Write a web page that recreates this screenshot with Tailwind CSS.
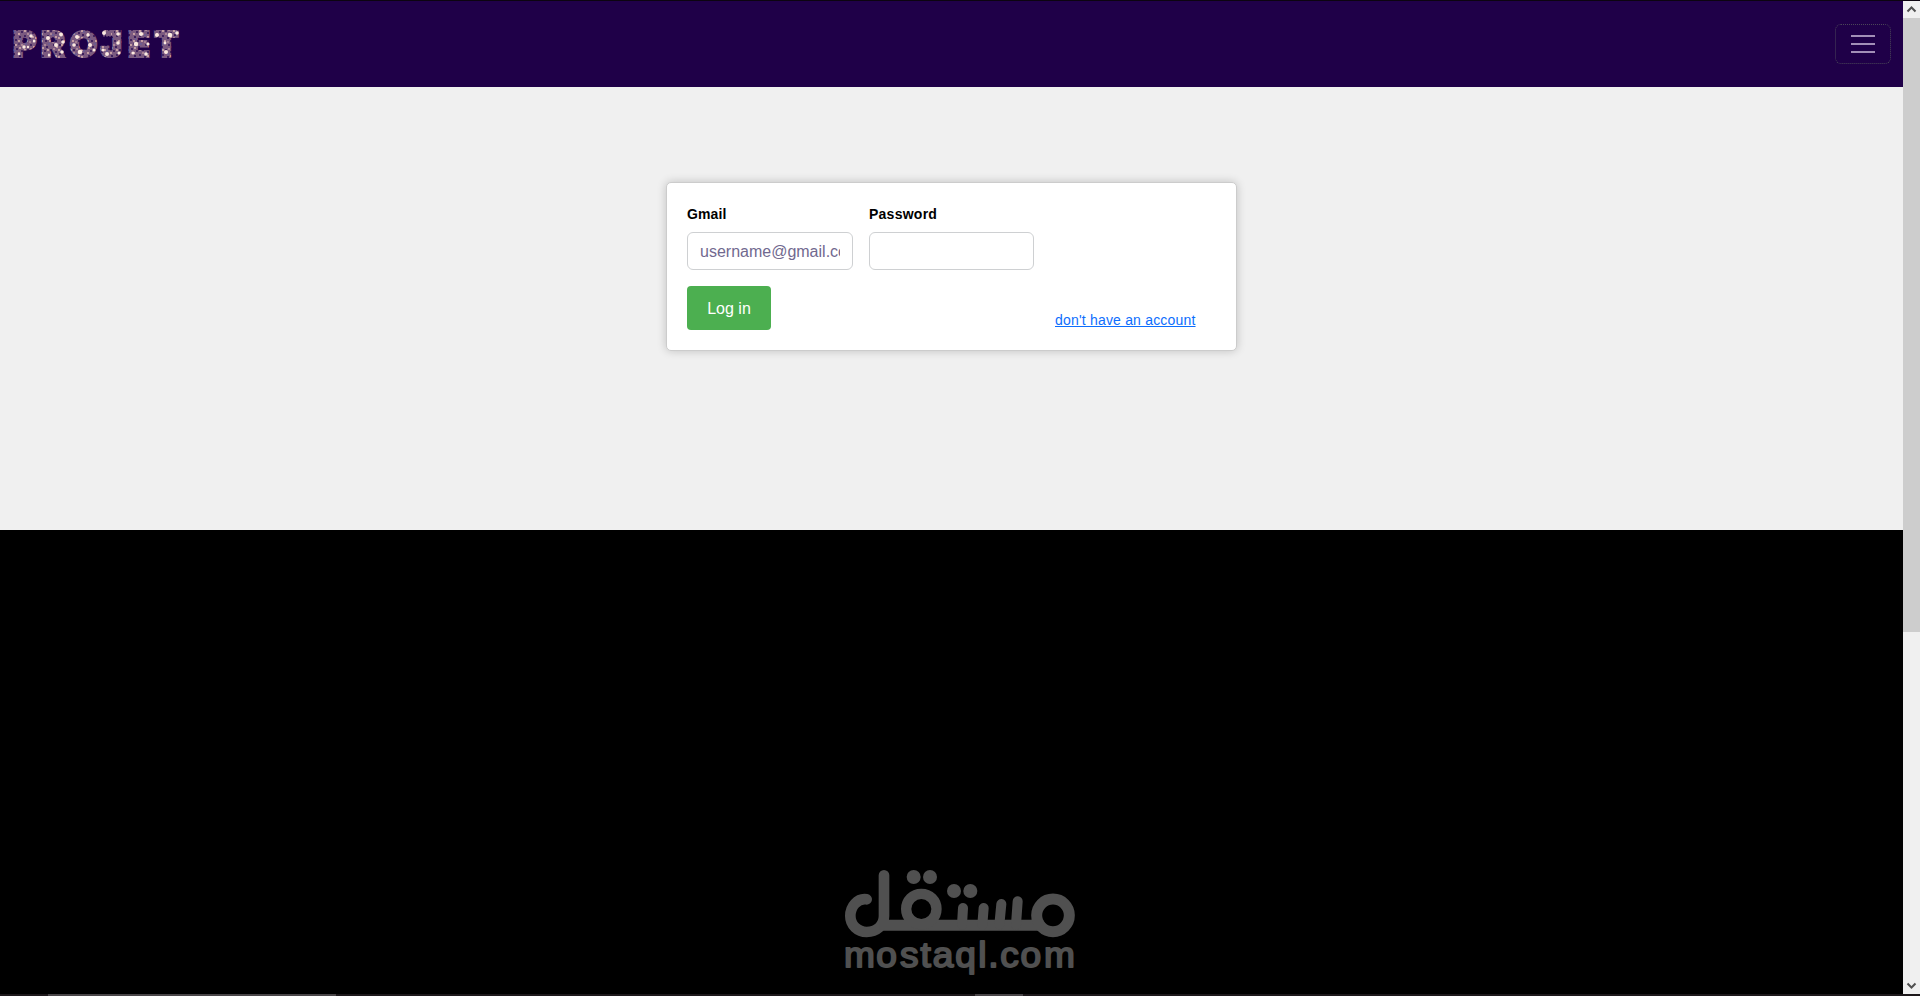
<!DOCTYPE html>
<html lang="en">
<head>
<meta charset="UTF-8" />
<meta name="viewport" content="width=device-width, initial-scale=1.0" />
<title>Projet - Log in</title>
<script src="https://cdn.jsdelivr.net/npm/@tailwindcss/browser@4"></script>
</head>
<body class="h-screen overflow-hidden bg-black font-['Liberation_Sans',sans-serif]">
<div class="flex flex-col h-screen border-t border-[#0c0410]">

    <div class="flex flex-1 min-h-0">
    <!-- Page -->
    <div class="relative flex flex-col flex-1 bg-black">
        <nav class="flex items-start justify-between h-[86px] bg-[#1f0048] pl-3 pr-3 pt-[23px]">
        <a href="#" aria-label="Projet">
            <svg class="w-[172px] h-10 overflow-visible" viewBox="0 0 172 40">
            <defs>
                <pattern id="speckle" width="23" height="19" patternUnits="userSpaceOnUse">
                <rect width="23" height="19" fill="#7b5a80" />
                <g fill="#270b50">
                    <circle cx="2" cy="2" r="1" /><circle cx="7" cy="1" r=".8" /><circle cx="12" cy="4" r="1" /><circle cx="19" cy="2" r=".9" />
                    <circle cx="5" cy="6" r=".9" /><circle cx="10" cy="8" r=".9" /><circle cx="16" cy="7" r="1" /><circle cx="21" cy="9" r=".9" />
                    <circle cx="2" cy="11" r="1" /><circle cx="8" cy="13" r="1" /><circle cx="13" cy="12" r=".9" /><circle cx="18" cy="14" r="1" />
                    <circle cx="4" cy="16" r=".9" /><circle cx="11" cy="17" r=".9" /><circle cx="21" cy="17" r="1" />
                </g>
                <g fill="#e6bdb2">
                    <circle cx="4" cy="2" r=".9" /><circle cx="10" cy="2" r=".8" /><circle cx="22" cy="4" r=".9" /><circle cx="8" cy="5" r=".9" />
                    <circle cx="1" cy="7" r=".9" /><circle cx="13" cy="7" r=".9" /><circle cx="19" cy="6" r=".8" /><circle cx="7" cy="10" r=".9" />
                    <circle cx="16" cy="10" r=".8" /><circle cx="21" cy="13" r=".9" /><circle cx="1" cy="14" r=".9" /><circle cx="7" cy="17" r=".9" />
                    <circle cx="15" cy="17" r=".9" /><circle cx="18" cy="18" r=".7" />
                </g>
                <g fill="#5360ac">
                    <circle cx="14" cy="1" r=".7" /><circle cx="3" cy="8" r=".7" /><circle cx="18" cy="11" r=".7" /><circle cx="9" cy="15" r=".7" />
                </g>
                </pattern>
            </defs>
            <text x="1 29 57.5 88.5 116 142" y="33" font-family="Inter, sans-serif" font-weight="900" font-size="36" fill="url(#speckle)" stroke="url(#speckle)" stroke-width="2">PROJET</text>
            <g fill="#fbe9df">
                <circle cx="19" cy="12" r="1.7" /><circle cx="22" cy="17" r="1.5" /><circle cx="12" cy="23" r="1.7" /><circle cx="7" cy="30" r="1.3" /><circle cx="16" cy="23" r="1.2" />
                <circle cx="36" cy="14" r="2" /><circle cx="49" cy="10.500" r="2" /><circle cx="51" cy="18" r="1.8" /><circle cx="44" cy="21" r="2" /><circle cx="37" cy="31" r="1.5" /><circle cx="50" cy="28" r="1.8" />
                <circle cx="65" cy="13" r="2" /><circle cx="76" cy="11" r="1.7" /><circle cx="62" cy="21" r="1.8" /><circle cx="78" cy="21" r="2" /><circle cx="82" cy="26" r="1.5" /><circle cx="68" cy="28" r="2.300" />
                <circle cx="106" cy="10" r="1.800" /><circle cx="106" cy="19" r="1.8" /><circle cx="91" cy="26" r="1.500" /><circle cx="95" cy="30" r="2" /><circle cx="107" cy="29" r="1.500" />
                <circle cx="129" cy="10" r="2.100" /><circle cx="124" cy="20" r="2.200" /><circle cx="136" cy="20" r="1.600" /><circle cx="121" cy="29" r="1.600" /><circle cx="134" cy="30" r="1.800" />
                <circle cx="145" cy="11" r="2" /><circle cx="158" cy="11" r="2.300" /><circle cx="165" cy="9" r="1.800" /><circle cx="153" cy="19" r="1.400" /><circle cx="154" cy="28" r="2" />
            </g>
            <!-- top bar of the J -->
            <path d="M92 9H104" stroke="url(#speckle)" stroke-width="6" />
            <path d="M91 9.500H104" stroke="#7b5a80" stroke-width="6" stroke-dasharray="2 1" />
            <circle cx="92" cy="9" r="2" fill="#fbe9df" />
            </svg>
        </a>
        <button type="button" aria-label="Menu" class="flex flex-col items-center justify-center gap-1.5 w-14 h-10 rounded-md border border-dotted border-[#4b4658]">
            <span class="w-6 h-0.5 bg-[#a28fb7]"></span>
            <span class="w-6 h-0.5 bg-[#a28fb7]"></span>
            <span class="w-6 h-0.5 bg-[#a28fb7]"></span>
        </button>
        </nav>

        <!-- Login -->
        <main class="h-[443px] bg-[#f0f0f0] pt-[95px]">
        <form class="ml-[666px] w-[571px] h-[169px] bg-white rounded-[5px] border border-[#ccc] shadow-[0_0_10px_rgba(0,0,0,0.2)] px-5 pt-[21px] flex gap-4">
            <div class="w-[166px]">
            <label for="email" class="block text-sm font-bold leading-[21px] tracking-[0.1px] mb-[7px] text-black">Gmail</label>
            <input id="email" type="text" placeholder="username@gmail.com" class="block w-full h-[38px] px-3 pt-0.5 text-base rounded-md border border-[#ced0d2] placeholder:text-[#71698f]" />
            <button type="button" class="mt-4 w-[84px] h-11 pt-0.5 rounded bg-[#4caf50] text-white text-base">Log in</button>
            </div>
            <div class="w-[165px]">
            <label for="password" class="block text-sm font-bold leading-[21px] tracking-[0.25px] mb-[7px] text-black">Password</label>
            <input id="password" type="password" class="block w-full h-[38px] px-3 rounded-md border border-[#ced0d2]" />
            </div>
            <div class="flex-1 pl-[5px] pt-[106px]">
            <a href="#" class="block w-[140px] text-sm leading-[21px] tracking-[0.19px] text-[#0d6efd] underline whitespace-nowrap">don't have an account</a>
            </div>
        </form>
        </main>

        <!-- Mostaql logo -->
        <svg class="absolute left-[830px] top-[859px] w-[260px] h-[120px]" viewBox="0 0 780 360" fill="none" stroke="#505050" stroke-linecap="round">
        <path d="M110 118C82 114 61 139 61 168C61 195 83 216 110 216C139 216 162 197 162 168V46" stroke-width="32" />
        <path d="M148 196H640" stroke-width="33" stroke-linecap="butt" />
        <circle cx="274" cy="147" r="45.500" stroke-width="31" />
        <path d="M399 144L396 194M461 144L457 194M514 132L508 194M563 124L558 194" stroke-width="30" />
        <circle cx="669" cy="166" r="49" stroke-width="33" />
        <g fill="#505050" stroke="none">
            <circle cx="251" cy="51" r="21" /><circle cx="300" cy="51" r="21" />
            <circle cx="372" cy="93" r="21" /><circle cx="421" cy="93" r="21" />
        </g>
        <text transform="scale(1.07 1)" x="39.5 130 196 254 288 351 416 444 477 534 600" y="322" font-size="104" font-family="Liberation Sans, sans-serif" fill="#505050" stroke-width="5.500" stroke-linejoin="round">mostaql.com</text>
        </svg>
    </div>

    <!-- Scrollbar -->
    <div class="flex flex-col w-[17px] bg-[#f0f0f0]">
        <svg class="w-[17px] h-[17px] shrink-0" viewBox="0 0 17 17" fill="none" stroke="#505050" stroke-width="2"><path d="M4.500 10.500L8.500 6.500L12.500 10.500" /></svg>
        <div class="h-[614px] bg-[#cdcdcd]"></div>
        <svg class="mt-auto w-[17px] h-[17px] shrink-0" viewBox="0 0 17 17" fill="none" stroke="#505050" stroke-width="2"><path d="M4.500 6.500L8.500 10.500L12.500 6.500" /></svg>
    </div>
    </div>

    <!-- Taskbar edge -->
    <div class="flex h-0.5 shrink-0 bg-[#1d181b] pl-12">
    <div class="w-72 bg-[#494548]"></div>
    <div class="ml-[639px] w-12 bg-[#494548]"></div>
    </div>
</div>
</body>
</html>
